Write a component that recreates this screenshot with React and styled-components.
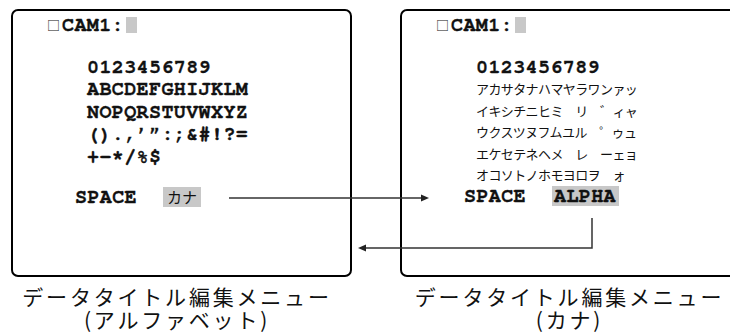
import styled, { createGlobalStyle } from 'styled-components';

const GlobalStyle = createGlobalStyle`
  html, body {
    margin: 0;
    padding: 0;
    background: #fff;
    overflow: hidden;
  }
`;

const monoStack =
  "'Nimbus Mono PS', 'Nimbus Mono L', 'FreeMono', 'Liberation Mono', monospace";

const Page = styled.div`
  position: relative;
  width: 730px;
  height: 333px;
  overflow: hidden;
  display: flex;
  gap: 48px;
  padding: 9px 0 0 11px;
  box-sizing: border-box;
  color: #111;
`;

const Column = styled.div`
  flex: 0 0 341px;
  display: flex;
  flex-direction: column;
`;

const Screen = styled.div`
  box-sizing: border-box;
  height: 268px;
  border: 2px solid #000;
  border-radius: 7px;
  padding: 6px 0 0 34px;
`;

const Header = styled.div`
  display: flex;
  align-items: center;
  height: 16px;
`;

const Mark = styled.span`
  font-family: 'Noto Sans CJK JP', sans-serif;
  font-size: 13px;
  line-height: 16px;
  width: 15px;
`;

const Mono = styled.span`
  font-family: ${monoStack};
  font-weight: bold;
  font-size: 20px;
  letter-spacing: 0.4px;
  white-space: pre;
  -webkit-text-stroke: 0.35px #111;
`;

const Cursor = styled.span`
  width: 11px;
  height: 16px;
  margin-left: 2px;
  background: #c8c8c8;
`;

const Chars = styled.div`
  margin: 23px 0 0 40px;
`;

const Row = styled.div`
  height: ${(p) => p.$h}px;
  line-height: ${(p) => p.$h}px;
  white-space: pre;
`;

const KanaRow = styled(Row)`
  font-family: 'Noto Sans CJK JP', sans-serif;
  font-size: 13px;
  letter-spacing: -0.6px;
`;

const SpaceRow = styled.div`
  display: flex;
  align-items: center;
  gap: 26px;
  height: 20px;
  margin: ${(p) => p.$top}px 0 0 28px;
`;

const Selected = styled.span`
  display: flex;
  align-items: center;
  height: 20px;
  padding: ${(p) => (p.$kana ? '0 4px' : '0 3px 0 2px')};
  background: #c8c8c8;
  font-family: ${(p) => (p.$kana ? "'Noto Sans CJK JP', sans-serif" : monoStack)};
  font-weight: ${(p) => (p.$kana ? 'normal' : 'bold')};
  font-size: ${(p) => (p.$kana ? '15px' : '20px')};
  letter-spacing: ${(p) => (p.$kana ? '0' : '0.4px')};
  -webkit-text-stroke: ${(p) => (p.$kana ? '0' : '0.35px #111')};
`;

const Caption = styled.div`
  margin-top: 8px;
  padding-right: ${(p) => p.$shift}px;
  font-family: 'Noto Sans CJK JP', sans-serif;
  font-size: 21px;
  line-height: 23px;
  letter-spacing: 2.8px;
  text-align: center;
`;

const Arrows = styled.svg`
  position: absolute;
  left: 0;
  top: 0;
  pointer-events: none;
`;

const alphaRows = [
  '0123456789',
  'ABCDEFGHIJKLM',
  'NOPQRSTUVWXYZ',
  '().,\u2019\u201d:;&#!?=',
  '+-*/%$',
];

const kanaRows = [
  'アカサタナハマヤラワンァッ',
  'イキシチニヒミ　リ　゛ィャ',
  'ウクスツヌフムユル　゜ゥュ',
  'エケセテネヘメ　レ　ーェョ',
  'オコソトノホモヨロヲ　ォ',
];

const CamHeader = () => (
  <Header>
    <Mark>□</Mark>
    <Mono>CAM1:</Mono>
    <Cursor />
  </Header>
);

export default function App() {
  return (
    <>
      <GlobalStyle />
      <Page>
        <Column>
          <Screen>
            <CamHeader />
            <Chars>
              {alphaRows.map((r) => (
                <Row key={r} $h={22.4}>
                  <Mono>{r}</Mono>
                </Row>
              ))}
            </Chars>
            <SpaceRow $top={18.6}>
              <Mono>SPACE</Mono>
              <Selected $kana>カナ</Selected>
            </SpaceRow>
          </Screen>
          <Caption $shift={9}>
            データタイトル編集メニュー
            <br />
            (アルファベット)
          </Caption>
        </Column>

        <Column>
          <Screen>
            <CamHeader />
            <Chars>
              <Row $h={22}>
                <Mono>0123456789</Mono>
              </Row>
              {kanaRows.map((r) => (
                <KanaRow key={r} $h={21.5}>
                  {r}
                </KanaRow>
              ))}
            </Chars>
            <SpaceRow $top={0.5}>
              <Mono>SPACE</Mono>
              <Selected>ALPHA</Selected>
            </SpaceRow>
          </Screen>
          <Caption $shift={2}>
            データタイトル編集メニュー
            <br />
            (カナ)
          </Caption>
        </Column>

        <Arrows width="730" height="333" viewBox="0 0 730 333">
          <g stroke="#333" strokeWidth="1.5" fill="none">
            <line x1="229" y1="198" x2="423" y2="198" />
            <polyline points="592,218 592,248 364,248" />
          </g>
          <g fill="#222">
            <polygon points="421,194.5 429,198 421,201.5" />
            <polygon points="366,244.5 358,248 366,251.5" />
          </g>
        </Arrows>
      </Page>
    </>
  );
}
